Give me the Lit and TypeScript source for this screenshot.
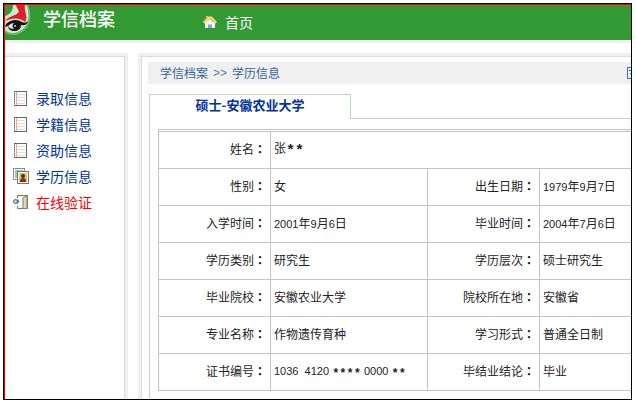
import { LitElement, html, css, svg } from "lit";
import { customElement } from "lit/decorators.js";

const page = svg`
  <rect x="1.5" y="1.5" width="12" height="14" fill="#fff" stroke="#6c6460"/>
  <path d="M4 4.500h8M4 7.500h8M4 10.500h8M4 13.500h8" stroke="#ddd"/>
  <path d="M3.500 2v13" stroke="#f3a98a"/>
  <path d="M1.500 2v13" stroke="#aaa" stroke-dasharray="1 1"/>`;

const photos = svg`
  <rect x=".5" y=".5" width="11" height="11" fill="#fff" stroke="#8a9298"/>
  <path d="M2 2h8v2H4v6H2z" fill="#8fc3d8"/>
  <rect x="4.500" y="3.500" width="11" height="12" fill="#fff" stroke="#777"/>
  <rect x="6" y="5" width="8" height="9" fill="#dcc65e"/>
  <circle cx="10" cy="8" r="2" fill="#5a2a12"/>
  <path d="M7 14c0-3 1-4 3-4s3 1 3 4z" fill="#7a3415"/>`;

const verify = svg`
  <path d="M4.500 1.500H14.500V14.500H4.500z" fill="#f4f3ec" stroke="#777"/>
  <path d="M10 4l4-2.500v13H10z" fill="#ddd9b4" stroke="#8a8764"/>
  <path d="M4 4H9v8H4z" fill="#fff"/>
  <circle cx="2.500" cy="7.500" r="2" fill="#a9d4f5" stroke="#3b6ea8"/>
  <path d="M4 5l2.500 2.500L4 10z" fill="#3b6ea8"/>`;

const menu = [
  { text: "录取信息", icon: page },
  { text: "学籍信息", icon: page },
  { text: "资助信息", icon: page },
  { text: "学历信息", icon: photos },
  { text: "在线验证", icon: verify, hot: true },
];

const records = [
  ["性别", "女", "出生日期", "1979年9月7日"],
  ["入学时间", "2001年9月6日", "毕业时间", "2004年7月6日"],
  ["学历类别", "研究生", "学历层次", "硕士研究生"],
  ["毕业院校", "安徽农业大学", "院校所在地", "安徽省"],
  ["专业名称", "作物遗传育种", "学习形式", "普通全日制"],
  ["证书编号", "1036  4120 **** 0000 **", "毕结业结论", "毕业"],
];

const label = (t: string) => html`<th scope="row">${t}<span class="colon">：</span></th>`;

// Digits and masking stars are set in their own faces beside the Chinese text.
const value = (t: string) =>
  t.split(/([\d ]+|\*+)/).filter(Boolean).map((p) =>
    p[0] === "*" ? html`<span class="stars">${p}</span>`
      : /^[\d ]/.test(p) ? html`<span class="digits">${p}</span>` : p);

@customElement("app-root")
export class AppRoot extends LitElement {
  static styles = css`
    :host {
      display: block;
      padding: 3px 4px 4px 3px;
      background: #fff;
      color: #222;
      font: 12px/16px "Noto Sans CJK SC", sans-serif;
    }
    a { color: inherit; text-decoration: none; }
    .frame { border: 1px solid #000; overflow: hidden; }
    .inner { border: solid #f00; border-width: 1px 0 0 1px; }
    header {
      display: flex;
      align-items: center;
      height: 35px;
      background: #393;
      color: #fff;
      border-bottom: 3px solid #f0f0f0;
    }
    .logo { width: 30px; height: 35px; flex: none; }
    .brand {
      width: 160px;
      padding: 0 0 10px 8px;
      font-size: 18px;
      line-height: 24px;
      font-weight: 500;
    }
    .home { display: flex; align-items: center; gap: 8px; padding-bottom: 2px; font-size: 14px; }
    .home svg { width: 14px; height: 14px; }
    .body { display: flex; gap: 10px; margin-top: 10px; }
    aside {
      flex: none;
      width: 120px;
      border: solid #f0f0f0;
      border-width: 3px 3px 0 0;
      box-shadow: inset -1px 1px #ddd;
    }
    ul { list-style: none; margin: 0; padding: 29px 0 0 8px; }
    li a {
      display: flex;
      align-items: center;
      gap: 7px;
      height: 26px;
      font-size: 14px;
      color: #039;
    }
    li svg { width: 16px; height: 16px; }
    li a.hot { color: #f00; }
    main {
      flex: 1;
      min-width: 0;
      border: solid #f0f0f0;
      border-width: 3px 0 0 3px;
      box-shadow: inset 1px 1px #ddd;
      padding: 6px 0 0 7px;
    }
    nav {
      display: flex;
      align-items: center;
      height: 22px;
      padding-left: 12px;
      gap: 5px;
      background: #f0f0f0;
      color: #369;
      overflow: hidden;
    }
    .sep { font-family: "Liberation Sans", sans-serif; font-size: 12px; color: #67a; }
    .help {
      margin-left: auto;
      width: 4px;
      height: 12px;
      overflow: hidden;
      flex: none;
    }
    .tabs { display: flex; margin: 10px 0 0 1px; }
    .tab {
      box-sizing: border-box;
      width: 202px;
      height: 25px;
      padding: 0 0 4px;
      border: 1px solid #b9d9b9;
      border-bottom: 0;
      background: #fff;
      color: #039;
      font: bold 13px/20px "Noto Sans CJK SC", sans-serif;
    }
    .rest { flex: 1; border-bottom: 1px solid #b9d9b9; }
    .sheet {
      margin-left: 1px;
      border-left: 1px solid #b9d9b9;
      padding: 10px 0 8px 8px;
    }
    .lead { border: solid #c4c4c4; border-width: 1px 0 0 1px; height: 1px; }
    table { width: 100%; table-layout: fixed; border-collapse: separate; border-spacing: 0;
      border: solid #c4c4c4; border-width: 1px 0 0 1px; }
    .key { width: 112px; }
    .mid { width: 157px; }
    th, td {
      box-sizing: border-box;
      height: 37px;
      padding: 0 4px 2px 3px;
      border: solid #c4c4c4;
      border-width: 0 1px 1px 0;
      font-weight: 400;
      text-align: left;
      white-space: pre;
    }
    th { text-align: right; }
    td:last-child { border-right: 0; }
    .colon { font-family: "Noto Sans CJK TC", sans-serif; font-weight: 700; }
    .digits { font: 11px/16px "Liberation Sans", sans-serif; }
    .stars { font: bold 12px/12px "Liberation Mono", monospace; vertical-align: -2px; }
    .stars.big { font-size: 15px; }
  `;

  render() {
    return html`
      <div class="frame"><div class="inner">
        <header>
          <svg class="logo" viewBox="0 0 30 35" aria-hidden="true">
            <path d="M0 0h23c2 5 3 10 2 15-1 6-5 11-11 14-6 2-11 1-14-2z" fill="#6dbb6d"/>
            <path d="M0 0h22c1 5 2 9 1 15-1 5-5 10-10 12-5 2-10 1-13-2z" fill="#cfe9cd"/>
            <path d="M0 0h8c0 5-2 9-8 11z" fill="#339933"/>
            <path d="M11 0h9c-1 4 1 7 1 10 1 3 0 5-1 7-4-4-11-5-20-1 4-5 10-5 13-8 2-2-1-4-2-8z" fill="#e01f2d"/>
            <path d="M1 19c5-5 12-5 16-2 2 1 4 1 6-1-1 4-4 5-7 4 0 4-3 6-7 6-3 0-6-2-6-5l-3 1z" fill="#151515"/>
            <path d="M3 21c2-2 4-3 6-3-2 2-2 4 0 6-3 0-5-1-6-3z" fill="#dfe9df"/>
            <circle cx="10" cy="21" r="1" fill="#c8d2c8"/>
          </svg>
          <div class="brand">学信档案</div>
          <a class="home" href="#">
            <svg viewBox="0 0 14 14" aria-hidden="true">
              <path d="M2 7h10v6H2z" fill="#f4f4ff"/>
              <path d="M0 7l5-5.500h4L14 7l-1.500 1.500L9 5 7 4 2 9z" fill="#f5d67a" stroke="#d99b3c" stroke-width=".6"/>
              <path d="M7 4l5 4.500V13H2V8.500z" fill="#f4f4ff"/>
              <path d="M5 13V9.500h4V13z" fill="#8fa0c8"/>
              <path d="M3 1h2v3H3z" fill="#efb86a"/>
            </svg>首页</a>
        </header>
        <div class="body">
          <aside>
            <ul>
              ${menu.map((m) => html`<li><a href="#" class=${m.hot ? "hot" : ""}>
                <svg viewBox="0 0 16 16" aria-hidden="true">${m.icon}</svg>${m.text}</a></li>`)}
            </ul>
          </aside>
          <main>
            <nav>
              <a href="#">学信档案</a><span class="sep">&gt;&gt;</span><a href="#">学历信息</a>
              <svg class="help" viewBox="0 0 4 12" aria-hidden="true">
                <path d="M1 1h4v10H1z" fill="#e8f6ff"/>
                <path d="M.5 0v12M0 .5h4M0 11.500h4" stroke="#3a78b8"/>
                <path d="M2 3.500h2M3 6.500h1" stroke="#1c66b0"/>
              </svg>
            </nav>
            <div class="tabs"><button class="tab">硕士-安徽农业大学</button><div class="rest"></div></div>
            <div class="sheet">
              <div class="lead"></div>
              <table>
                <colgroup><col class="key"><col class="mid"><col class="key"><col></colgroup>
                <tbody>
                  <tr>${label("姓名")}<td colspan="3">张<span class="stars big">**</span></td></tr>
                  ${records.map(([a, b, c, d]) => html`<tr>${label(a)}<td>${value(b)}</td>${label(c)}<td>${value(d)}</td></tr>`)}
                </tbody>
              </table>
            </div>
          </main>
        </div>
      </div></div>`;
  }
}
